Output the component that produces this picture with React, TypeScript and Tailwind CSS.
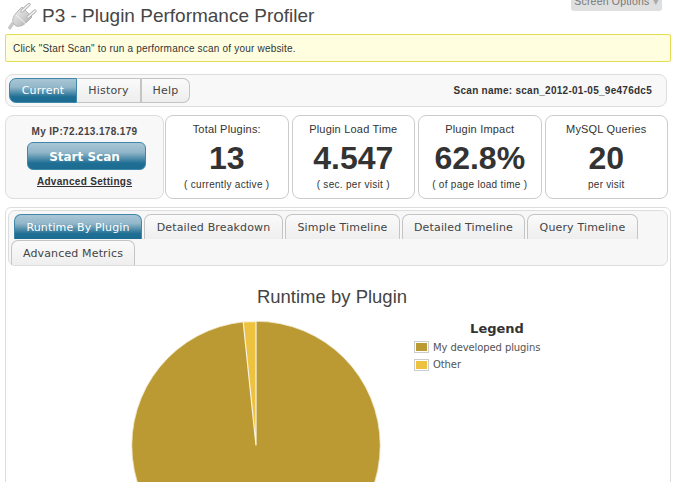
import React from "react";

const Card = ({ title, value, sub, subCls = "" }: { title: string; value: string; sub: string; subCls?: string }) => (
  <div className="w-[123.5px] h-[84px] shrink-0 rounded-[8px] border border-[#cccccc] bg-white flex flex-col items-center text-[#333333]">
    <div className="mt-[6px] text-[11px] leading-[14px] tracking-[0.2px]">{title}</div>
    <div className="mt-[3px] text-[32px] leading-[38px] font-bold">{value}</div>
    <div className={`mt-[1px] leading-[14px] ${subCls || "text-[10px] tracking-[0.3px]"}`}>{sub}</div>
  </div>
);

const blue = "bg-[linear-gradient(#a9c6d6_0%,#93b7ca_35%,#1f6e94_78%,#1c6b91_100%)]";
const tabBase = "h-[25px] pt-[2px] flex items-center justify-center rounded-t-[7px] border border-b-0 text-[11px] tracking-[0.15px] font-['DejaVu_Sans',sans-serif]";
const tabOff = `${tabBase} border-[#c4c4c4] bg-gradient-to-b from-[#fafafa] to-[#eeeeee] text-[#444444]`;
const tabOn = `${tabBase} border-[#3f87aa] ${blue} text-white`;

const Plug = () => (
  <svg viewBox="0 0 30 28" className="w-[30px] h-[28px] shrink-0">
    <defs>
      <linearGradient id="plugG" x1="0" y1="0" x2="1" y2="1">
        <stop offset="0" stopColor="#f2f2f2" />
        <stop offset="0.55" stopColor="#cfcfcf" />
        <stop offset="1" stopColor="#a8a8a8" />
      </linearGradient>
    </defs>
    <path d="M1 27 L5 21" stroke="#c9c9c9" strokeWidth="3.5" fill="none" />
    <path d="M5 21 C4 17 6 13 9 10 L14 5 L24 15 L19 20 C16 23 12 25 8 24 Z" fill="url(#plugG)" stroke="#a8a8a8" strokeWidth="0.8" />
    <path d="M14 9 L21 2.5" stroke="#b5b5b5" strokeWidth="3.4" strokeLinecap="round" />
    <path d="M14 9 L21 2.5" stroke="#f5f5f5" strokeWidth="1.4" strokeLinecap="round" />
    <path d="M20 15 L27 9" stroke="#b5b5b5" strokeWidth="3.4" strokeLinecap="round" />
    <path d="M20 15 L27 9" stroke="#f5f5f5" strokeWidth="1.4" strokeLinecap="round" />
    <path d="M8 13 L18 22" stroke="#ffffff" strokeWidth="1" opacity="0.8" />
  </svg>
);

const Pie = () => {
  const cx = 126, cy = 125.5, r = 124.2;
  const a = (-5.9 * Math.PI) / 180;
  const x = cx + r * Math.sin(a);
  const y = cy - r * Math.cos(a);
  return (
    <svg width="251" height="251" viewBox="0 0 251 251" className="shrink-0">
      <circle cx={cx} cy={cy} r={r} fill="#bb9a33" stroke="#efe6cc" strokeWidth="0.8" />
      <path d={`M${cx} ${cy} L${cx} ${cy - r} A${r} ${r} 0 0 0 ${x} ${y} Z`} fill="#edc240" stroke="#f8f3e2" strokeWidth="1.2" />
    </svg>
  );
};

export default function App() {
  return (
    <div className="relative w-[675px] h-[482px] overflow-hidden bg-white font-['Liberation_Sans',sans-serif] text-[#333333]">
      <div className="absolute right-[13px] -top-[9px] w-[91px] h-[20px] rounded-b-[3px] bg-[#dfdfdf] text-[#777777] text-[10.5px] leading-[20px] text-center tracking-[0.2px]">
        Screen Options <span className="text-[#aaaaaa]">▾</span>
      </div>

      <div className="h-[34px] flex items-center pl-[8px] gap-[4px] pb-[3px]">
        <Plug />
        <h2 className="text-[19px] leading-[26px] text-[#464646]">P3 - Plugin Performance Profiler</h2>
      </div>

      <div className="mx-[5px] mr-[4px] h-[28px] pl-[7px] pt-[1px] flex items-center rounded-[2px] border border-[#e6db55] bg-[#ffffe0] text-[10px] tracking-[0.2px]">
        Click "Start Scan" to run a performance scan of your website.
      </div>

      <div className="mt-[12px] ml-[5px] w-[662px] h-[33px] rounded-[8px] border border-[#dddddd] bg-[#f8f8f8] flex items-center justify-between pl-[3px] pr-[14px]">
        <div className="flex h-[25px] text-[11px] tracking-[0.2px] font-['DejaVu_Sans',sans-serif]">
          <div className={`w-[68px] pt-[2px] rounded-l-[7px] border border-[#3f87aa] ${blue} text-white flex items-center justify-center`}>Current</div>
          <div className="w-[65px] pt-[2px] border-y border-r-2 border-[#c4c4c4] bg-gradient-to-b from-[#fafafa] to-[#eeeeee] text-[#444444] flex items-center justify-center">History</div>
          <div className="w-[48px] pt-[2px] rounded-r-[7px] border-y border-r border-[#c4c4c4] bg-gradient-to-b from-[#fafafa] to-[#eeeeee] text-[#444444] flex items-center justify-center">Help</div>
        </div>
        <div className="text-[10px] font-bold tracking-[0.27px] text-[#333333]">Scan name: scan_2012-01-05_9e476dc5</div>
      </div>

      <div className="mt-[8px] ml-[5px] flex">
        <div className="w-[159px] h-[84px] shrink-0 rounded-[8px] border border-[#dddddd] bg-[#f8f8f8] flex flex-col items-center">
          <div className="mt-[9px] text-[10px] font-bold leading-[14px] tracking-[0.35px] text-[#444444]">My IP:72.213.178.179</div>
          <div className={`mt-[3px] ml-[4px] w-[119px] h-[28px] pt-[1px] rounded-[6px] border border-[#3f87aa] ${blue} text-white text-[12px] font-bold font-['DejaVu_Sans',sans-serif] flex items-center justify-center pr-[4px]`}>Start Scan</div>
          <div className="mt-[5px] text-[10px] leading-[14px] font-bold underline tracking-[0.3px] text-[#333333]">Advanced Settings</div>
        </div>
        <div className="ml-[1px] flex gap-[3px]">
          <Card title="Total Plugins:" value="13" sub="( currently active )" />
          <Card title="Plugin Load Time" value="4.547" sub="( sec. per visit )" />
          <Card title="Plugin Impact" value="62.8%" sub="( of page load time )" />
          <Card title="MySQL Queries" value="20" sub="per visit" subCls="text-[10px] tracking-[0.2px]" />
        </div>
      </div>

      <div className="mt-[8px] ml-[5px] w-[666px] h-[290px] rounded-t-[6px] border border-[#dddddd] px-[2px] pt-[2px]">
        <div className="h-[56px] w-[660px] rounded-[7px] border border-[#dddddd] bg-[#f7f7f7] pt-[3px]">
          <div className="flex pl-[5px] gap-[2px]">
            <div className={`${tabOn} w-[128px]`}>Runtime By Plugin</div>
            <div className={`${tabOff} w-[139px]`}>Detailed Breakdown</div>
            <div className={`${tabOff} w-[115px]`}>Simple Timeline</div>
            <div className={`${tabOff} w-[123px]`}>Detailed Timeline</div>
            <div className={`${tabOff} w-[111px]`}>Query Timeline</div>
          </div>
          <div className="flex pl-[2px] mt-[1px]">
            <div className={`${tabOff} w-[124px]`}>Advanced Metrics</div>
          </div>
        </div>
        <div>
          <h3 className="mt-[20px] text-center text-[18.5px] leading-[22px] text-[#444444] pr-[12px]">Runtime by Plugin</h3>
          <div className="flex mt-[12px] pl-[122px]">
            <Pie />
            <div className="ml-[33px] font-['DejaVu_Sans',sans-serif] text-[10px] tracking-[-0.1px] text-[#545454] w-[168px]">
              <div className="text-center text-[13px] leading-[16px] mt-[1px] font-bold text-[#333333] tracking-normal pr-[2px]">Legend</div>
              <div className="flex items-center gap-[4px] h-[18px] mt-[1px]">
                <span className="w-[15px] h-[12px] border border-[#cccccc] p-[1px] bg-white"><span className="block w-full h-full bg-[#bb9a33]" /></span>
                My developed plugins
              </div>
              <div className="flex items-center gap-[4px] h-[17px]">
                <span className="w-[15px] h-[12px] border border-[#cccccc] p-[1px] bg-white"><span className="block w-full h-full bg-[#edc240]" /></span>
                Other
              </div>
            </div>
          </div>
        </div>
      </div>
    </div>
  );
}
